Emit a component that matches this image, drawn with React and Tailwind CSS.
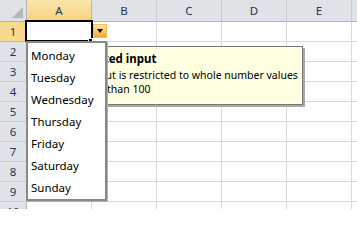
import React from 'react';

const columns = ['A', 'B', 'C', 'D', 'E', 'F'];
const rows = [1, 2, 3, 4, 5, 6, 7, 8, 9, 10];
const days = ['Monday', 'Tuesday', 'Wednesday', 'Thursday', 'Friday', 'Saturday', 'Sunday'];

const App = () => {
  return (
    <div className="relative w-[357px] h-[209px] overflow-hidden bg-white font-['Noto_Sans',sans-serif] select-none">
      {/* Column headers */}
      <div className="flex h-[22px]">
        <div className="relative w-[27px] shrink-0 bg-[#dfe3e8] border-r border-b border-[#b1b5ba]">
          <div className="absolute right-[3px] bottom-[3px] w-0 h-0 border-l-[11px] border-l-transparent border-b-[11px] border-b-[#b4b8bd]" />
        </div>
        {columns.map((col) => (
          <div
            key={col}
            className={
              col === 'A'
                ? 'w-[65px] shrink-0 flex items-center justify-center text-[11.5px] text-[#1f3552] bg-gradient-to-b from-[#fbe6aa] to-[#f7d27c] border-r border-b border-[#e0b45c]'
                : 'w-[65px] shrink-0 flex items-center justify-center text-[11.5px] text-[#1f3552] bg-[#dfe3e8] border-r border-b border-r-[#c9cdd2] border-b-[#b1b5ba]'
            }
          >
            {col}
          </div>
        ))}
      </div>

      {/* Rows */}
      {rows.map((r) => (
        <div key={r} className="flex h-[20px]">
          <div
            className={
              r === 1
                ? 'w-[27px] shrink-0 flex items-center justify-center text-[11.5px] text-[#1f3552] bg-[#f9d98c] border-r border-b border-[#e0b45c]'
                : 'w-[27px] shrink-0 flex items-center justify-center text-[11.5px] text-[#1f3552] bg-[#dfe3e8] border-r border-b border-r-[#b1b5ba] border-b-[#c9cdd2]'
            }
          >
            {r}
          </div>
          {columns.map((col) => (
            <div key={col} className="w-[65px] shrink-0 border-r border-b border-[#d8d8d8]" />
          ))}
        </div>
      ))}

      {/* Active cell A1 */}
      <div className="absolute left-[25px] top-[20px] w-[68px] h-[22px] border-2 border-black" />
      <div className="absolute left-[88px] top-[38px] w-[5px] h-[5px] bg-black border border-white" />

      {/* Dropdown button */}
      <div className="absolute left-[93px] top-[24px] w-[14px] h-[14px] border border-[#f3bf52] bg-gradient-to-b from-[#fde3ab] via-[#fbc56f] to-[#f8a43e] flex items-center justify-center">
        <div className="w-0 h-0 border-l-[3.5px] border-r-[3.5px] border-t-[4px] border-l-transparent border-r-transparent border-t-black" />
      </div>

      {/* Input message */}
      <div className="absolute left-[59px] top-[46px] w-[244px] h-[59px] bg-[#ffffe1] border border-[#767676] shadow-[2px_2px_0_#a8a8a8] pl-[4px] pt-[3px] text-black whitespace-nowrap">
        <div className="text-[11.5px] font-bold leading-[17px]">Restricted input</div>
        <div className="text-[10.5px] leading-[14px] mt-[1px]">Data input is restricted to whole number values</div>
        <div className="text-[10.5px] leading-[14px]">and less than 100</div>
      </div>

      {/* Dropdown list */}
      <div className="absolute left-[26px] top-[41px] w-[81px] h-[160px] bg-white border-2 border-[#888888] shadow-[1px_1px_0_#b0b0b0] pt-[2px]">
        {days.map((d) => (
          <div key={d} className="h-[22px] flex items-center pl-[3px] text-[11.5px] text-black">
            {d}
          </div>
        ))}
      </div>
    </div>
  );
};

export default App;
